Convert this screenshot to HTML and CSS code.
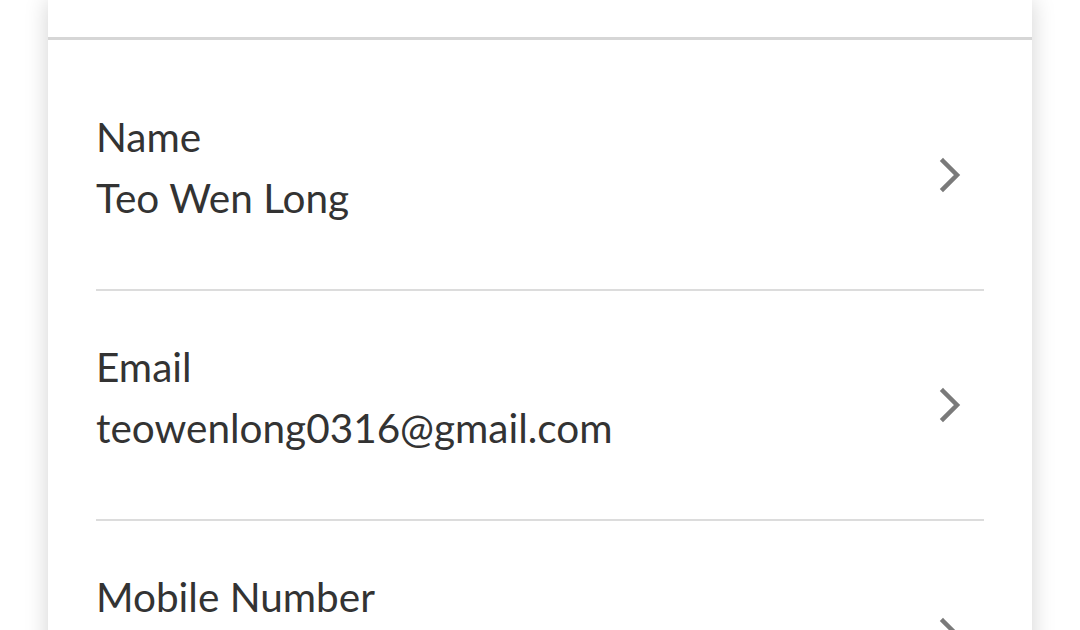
FILE: index.html
```html
<!DOCTYPE html>
<html lang="en">
<head>
  <meta charset="UTF-8">
  <meta name="viewport" content="width=device-width, initial-scale=1.0">
  <title>Profile</title>
  <link rel="stylesheet" href="styles.css">
</head>
<body>

  <div class="profile-card">
    <!-- Header area above the list -->
    <div class="card-top"></div>

    <div class="field-list">
      <div class="field-row">
        <div class="field-text">
          <div class="field-label">Name</div>
          <div class="field-value">Teo Wen Long</div>
        </div>
        <svg class="chevron" viewBox="0 0 24 36" width="24" height="36"><path d="M5 4 L19 18 L5 32" fill="none" stroke="#7a7a7a" stroke-width="4.5" stroke-linecap="square"/></svg>
      </div>

      <div class="field-row">
        <div class="field-text">
          <div class="field-label">Email</div>
          <div class="field-value">teowenlong0316@gmail.com</div>
        </div>
        <svg class="chevron" viewBox="0 0 24 36" width="24" height="36"><path d="M5 4 L19 18 L5 32" fill="none" stroke="#7a7a7a" stroke-width="4.5" stroke-linecap="square"/></svg>
      </div>

      <div class="field-row">
        <div class="field-text">
          <div class="field-label">Mobile Number</div>
          <div class="field-value">+65 9123 4567</div>
        </div>
        <svg class="chevron" viewBox="0 0 24 36" width="24" height="36"><path d="M5 4 L19 18 L5 32" fill="none" stroke="#7a7a7a" stroke-width="4.5" stroke-linecap="square"/></svg>
      </div>
    </div>
  </div>

</body>
</html>
```

FILE: styles.css
```css
/* Page */
body {
  margin: 0;
  background-color: #fff;
  font-family: "Lato", "Liberation Sans", sans-serif;
  color: #333;
  overflow: hidden;
}

/* Card */
.profile-card {
  width: 984px;
  margin: 0 48px;
  background-color: #fff;
  box-shadow: 0 0 22px rgba(0, 0, 0, 0.18);
  min-height: 700px;
}

.card-top {
  height: 37px;
  border-bottom: 3px solid #d6d6d6;
}

.field-list {
  padding: 0 48px;
  margin-top: 21px;
}

.field-row {
  display: flex;
  align-items: center;
  justify-content: space-between;
  height: 228px;
  border-bottom: 2px solid #dcdcdc;
}

.field-text {
  padding-bottom: 16px;
}

.field-label,
.field-value {
  font-size: 40.5px;
  line-height: 61px;
}

.chevron {
  margin-right: 22px;
}
```
